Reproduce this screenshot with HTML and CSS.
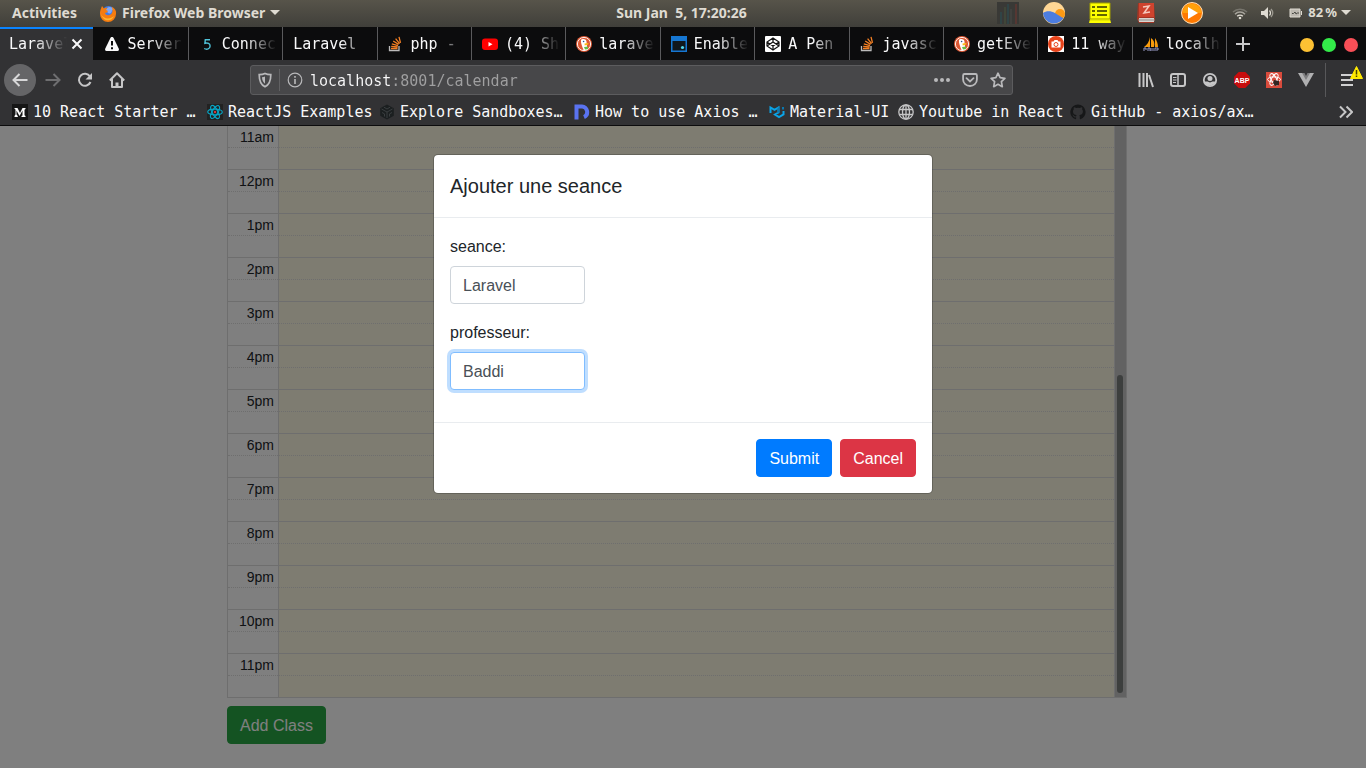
FILE: index.html
```html
<!DOCTYPE html>
<html lang="fr">
<head>
<meta charset="utf-8">
<title>Laravel</title>
<link rel="stylesheet" href="styles.css">
</head>
<body>
<svg class="sprite" aria-hidden="true">
  <symbol id="so" viewBox="0 0 16 16"><path d="M1.5 10v4.5h9.500V10" fill="none" stroke="#bcbbbb" stroke-width="1.300"/><path d="M3 12.500h6.500M3.200 10.300l6.400.7M3.800 7.800l6.200 1.800M5.200 5l5.400 3.400M7.600 2.600l4 5M11 .8l1.500 6" stroke="#f48024" stroke-width="1.300" fill="none"/></symbol>
  <symbol id="duck" viewBox="0 0 16 16"><circle cx="8" cy="8" r="8" fill="#de5833"/><circle cx="8" cy="8" r="6.600" fill="none" stroke="#fff" stroke-width=".9"/><path d="M5 4c1-1.500 5-1.500 5.500 1.500l.2 3 .8 5a6 6 0 0 1-4 .6C6.500 11 4.500 7 5 4z" fill="#fff"/><path d="M8.500 7.500l4-.5-.3 1.500-3.500 1z" fill="#fdb813"/><path d="M8 11l4-.5v2.500l-3 .6z" fill="#65bc46"/><circle cx="7.600" cy="5.500" r=".8" fill="#2d4f8e"/></symbol>
</svg>

<header class="topbar">
  <nav class="topbar-left">
    <button class="top-item">Activities</button>
    <button class="top-item">
      <svg width="18" height="18" viewBox="0 0 18 18"><circle cx="9.500" cy="8.500" r="6.500" fill="#3f7be8"/><path d="M10 3c3 0 5 2 5 4l-2-1c0 3-2 4-4 3l-3-4z" fill="#7fa8f5"/><path d="M3 2l2 2.500c1-.7 2-.8 3.500-.7L7 6l2 1-1 1.500-2 .5c1 3 5 3 7 0 1-2 .5-5-.5-6.500C16 4 17.500 7 17 10a8 8 0 0 1-16 0C.7 7 2 5 3 2z" fill="#f57c10"/><path d="M2 10c2 5 9 6 13 2-2 6-11 6-13-2z" fill="#ffb52b"/></svg>
      <span>Firefox Web Browser</span>
      <svg width="10" height="6" viewBox="0 0 10 6"><path d="M0 0h10L5 5z" fill="#dfdbd2"/></svg>
    </button>
  </nav>
  <time class="clock">Sun Jan&nbsp; 5, 17:20:26</time>
  <div class="tray">
    <svg width="22" height="22" viewBox="0 0 22 22"><path d="M0 0h22v22H0z" fill="#393936"/><path d="M4 10v12M11 2v20" stroke="#295056"/><path d="M8 5v17" stroke="#48543b"/><path d="M19 2v20" stroke="#74372f"/><path d="M14 7v15" stroke="#4b4b47"/></svg>
    <svg width="22" height="22" viewBox="0 0 22 22"><circle cx="11" cy="11" r="11" fill="#ffd795"/><circle cx="17" cy="12" r="5" fill="#fb9915"/><path d="M0 11c3-2.500 8-2.500 12 0s6 4 8.500 5a11 11 0 0 1-20.500-5z" fill="#4c7de0"/></svg>
    <svg width="22" height="22" viewBox="0 0 22 22"><path d="M1 1h20v16l1 4H0l1-4z" fill="#ff0"/><path d="M1 1h20v16H1z" fill="none" stroke="#a3a000"/><path d="M3 5h3M3 9h3M3 13h3M8 5h10M8 9h10M8 13h10" stroke="#333300" stroke-width="1.500"/><path d="M1 18h20" stroke="#d7d500"/></svg>
    <svg width="22" height="22" viewBox="0 0 22 22"><path d="M3 1l16 1 1 14-1 5H4l-2-4z" fill="#a33524"/><path d="M4 1h15v14H4z" fill="#ce432e"/><path d="M4 16h15v4H4z" fill="#d9d5d0"/><path d="M3 18h17" stroke="#8e8e8b"/><path d="M8 5l6-1-5 7 6-1" stroke="#f7c9bd" stroke-width="1.500" fill="none"/></svg>
    <svg width="22" height="22" viewBox="0 0 22 22"><circle cx="11" cy="11" r="10.500" fill="#ff7900" stroke="#ffe1b4"/><path d="M1.500 11a9.500 9.500 0 0 1 19 0z" fill="#ffa00b"/><path d="M7 5l10 6-10 6z" fill="#fff"/></svg>
    <div class="status">
      <svg width="16" height="16" viewBox="0 0 16 16" fill="none" stroke-width="1.500"><path d="M1 7a10 10 0 0 1 14 0" stroke="#77756d"/><path d="M3 9.200a7 7 0 0 1 10 0" stroke="#a8a59d"/><path d="M5.200 11.300a4 4 0 0 1 5.600 0" stroke="#dfdbd2"/><circle cx="8" cy="13" r="1.300" fill="#dfdbd2"/></svg>
      <svg width="16" height="16" viewBox="0 0 16 16" fill="none"><path d="M1 6h3l4-4v12l-4-4H1z" fill="#dfdbd2"/><path d="M9.500 5.500q2 2.500 0 5" stroke="#dfdbd2" stroke-width="1.300"/><path d="M11 4q3.500 4 0 8" stroke="#9b988f" stroke-width="1.300"/></svg>
      <svg width="16" height="16" viewBox="0 0 16 16"><path d="M2 4h10v8H2z" fill="#bcb8b0" stroke="#dfdbd2"/><path d="M13 6h1v4h-1z" fill="#dfdbd2"/><path d="M4 8.500h1.500L7 7l1 2 1.500-1H11" fill="none" stroke="#4b4a45"/></svg>
      <span>82&thinsp;%</span>
      <svg class="caret" width="10" height="6" viewBox="0 0 10 6"><path d="M0 0h10L5 5z" fill="#dfdbd2"/></svg>
    </div>
  </div>
</header>

<div class="tabstrip">
  <div class="tabs" role="tablist">
    <button class="tab active" role="tab" aria-selected="true"><span class="tab-text">Laravel</span><svg class="tab-close" width="12" height="12" viewBox="0 0 12 12"><path d="M1.500 1.500l9 9M10.500 1.500l-9 9" stroke="#f9f9fa" stroke-width="2"/></svg></button>
    <button class="tab" role="tab"><svg width="16" height="16" viewBox="0 0 16 16"><path d="M8 1c1 0 1.300.4 1.700 1.200l5 10.300c.6 1.300.1 2.500-1.200 2.500h-11c-1.300 0-1.800-1.200-1.200-2.500l5-10.300C6.700 1.400 7 1 8 1z" fill="#f9f9fa"/><path d="M8 5v4.500M8 11.200v2" stroke="#0c0c0d" stroke-width="2"/></svg><span class="tab-text">Server</span></button>
    <button class="tab" role="tab"><svg width="16" height="16" viewBox="0 0 16 16"><path d="M11 3.700H6.300l-.4 3.600c2.800-.8 5.200.2 5.200 2.700 0 3-3.300 4-5.900 2.500" fill="none" stroke="#4fc3d9" stroke-width="1.400"/></svg><span class="tab-text">Connec</span></button>
    <button class="tab" role="tab"><span class="tab-text">Laravel</span></button>
    <button class="tab" role="tab"><svg width="16" height="16"><use href="#so"/></svg><span class="tab-text">php -</span></button>
    <button class="tab" role="tab"><svg width="16" height="16" viewBox="0 0 16 16"><rect y="2.500" width="16" height="11.500" rx="3" fill="red"/><path d="M6.500 6l4 2.200-4 2.300z" fill="#fff"/></svg><span class="tab-text">(4) Sh</span></button>
    <button class="tab" role="tab"><svg width="16" height="16"><use href="#duck"/></svg><span class="tab-text">larave</span></button>
    <button class="tab" role="tab"><svg width="16" height="16" viewBox="0 0 16 16"><path d="M0 0h16v16H0z" fill="#1677d2"/><path d="M1.500 5h13v9.500h-13z" fill="#10171d"/><circle cx="11.500" cy="11.500" r="1.600" fill="#50d7ef"/></svg><span class="tab-text">Enable</span></button>
    <button class="tab" role="tab"><svg width="16" height="16" viewBox="0 0 16 16"><rect width="16" height="16" rx="1" fill="#fff"/><path d="M8 2l6 4v4l-6 4-6-4V6zM8 2v4M8 10v4M2 6l6 4 6-4M2 10l6-4 6 4" fill="none" stroke="#111" stroke-width="1.200"/></svg><span class="tab-text">A Pen</span></button>
    <button class="tab" role="tab"><svg width="16" height="16"><use href="#so"/></svg><span class="tab-text">javasc</span></button>
    <button class="tab" role="tab"><svg width="16" height="16"><use href="#duck"/></svg><span class="tab-text">getEve</span></button>
    <button class="tab" role="tab"><svg width="16" height="16" viewBox="0 0 16 16"><path d="M0 0h16v16H0z" fill="#fff"/><circle cx="8" cy="8" r="8" fill="#e8441b"/><path d="M3.500 5.500h2l1-1.500h3l1 1.500h2v6h-9z" fill="#fff"/><circle cx="8" cy="8.500" r="2" fill="none" stroke="#e8441b"/></svg><span class="tab-text">11 way</span></button>
    <button class="tab" role="tab"><svg width="16" height="16" viewBox="0 0 16 16"><path d="M7 1v10H1c3-2 5-5 6-10zM8 2c3 2 4 5 3 9H8zM12 2c2 3 3 6 3 9h-3z" fill="#f89c0e"/><path d="M1 15v-3h2v2M5 15v-3h2v3M8 12v3M10 12v3M12 15v-3h3v2h-2" stroke="#9a9cc8" fill="none"/></svg><span class="tab-text">localh</span></button>
  </div>
  <button class="new-tab" aria-label="New tab"><svg width="14" height="14" viewBox="0 0 14 14"><path d="M7 0v14M0 7h14" stroke="#c8c8c9" stroke-width="2"/></svg></button>
  <div class="window-controls">
    <button class="dot yellow" aria-label="Minimize"></button>
    <button class="dot green" aria-label="Maximize"></button>
    <button class="dot red" aria-label="Close"></button>
  </div>
</div>

<div class="navbar">
  <div class="nav-left">
    <button class="back" aria-label="Back"><svg width="16" height="16" viewBox="0 0 16 16"><path d="M15.500 8H1.500M7.500 2L1.500 8l6 6" fill="none" stroke="#d7d7d8" stroke-width="2"/></svg></button>
    <button aria-label="Forward"><svg width="16" height="16" viewBox="0 0 16 16"><path d="M.5 8h14M8.500 2l6 6-6 6" fill="none" stroke="#6e6e70" stroke-width="2"/></svg></button>
    <button aria-label="Reload"><svg width="16" height="16" viewBox="0 0 16 16"><path d="M13.500 10A6 6 0 1 1 13 4.500" fill="none" stroke="#c6c6c7" stroke-width="2"/><path d="M15 1v6.500H8.500z" fill="#c6c6c7"/></svg></button>
    <button aria-label="Home"><svg width="16" height="16" viewBox="0 0 16 16"><path d="M.8 8.500L8 1.300l7.200 7.200M3 7v8h10V7" fill="none" stroke="#c6c6c7" stroke-width="2" stroke-linejoin="round"/><path d="M6.500 15v-4.500h3V15" fill="#c6c6c7"/></svg></button>
  </div>
  <div class="urlbar">
    <svg width="16" height="16" viewBox="0 0 16 16"><path d="M8 1.500c2 1 4 1.200 5.800 1.200 0 6-1.300 10-5.800 12-4.500-2-5.800-6-5.800-12C4 2.700 6 2.500 8 1.500z" fill="none" stroke="#b9b9bb" stroke-width="1.700"/><path d="M8 4.500v7.300C5.800 10 5.200 8 5 5.300 6.200 5.200 7 5 8 4.500z" fill="#b9b9bb"/></svg>
    <span class="url-sep"></span>
    <svg width="16" height="16" viewBox="0 0 16 16"><circle cx="8" cy="8" r="6.800" fill="none" stroke="#b9b9bb" stroke-width="1.200"/><path d="M8 7v5M8 4v1.700" stroke="#b9b9bb" stroke-width="1.600"/></svg>
    <input class="url" type="text" aria-label="Address" value="localhost:8001/calendar">
    <div class="url-actions">
      <svg width="16" height="16" viewBox="0 0 16 16" fill="#b9b9bb"><circle cx="2" cy="8" r="2"/><circle cx="8" cy="8" r="2"/><circle cx="14" cy="8" r="2"/></svg>
      <svg width="16" height="16" viewBox="0 0 16 16" fill="none" stroke="#b9b9bb" stroke-width="1.800"><path d="M2.500 2h11c.8 0 1.400.6 1.400 1.400V7.500a6.900 6.500 0 0 1-13.800 0V3.400C1.100 2.600 1.700 2 2.500 2z"/><path d="M4.500 6.200L8 9.500l3.500-3.300" stroke-linecap="round"/></svg>
      <svg width="16" height="16" viewBox="0 0 16 16"><path d="M8 1.200l2.100 4.500 4.800.6-3.500 3.400.9 5L8 12.300l-4.300 2.400.9-5L1.100 6.300l4.800-.6z" fill="none" stroke="#b9b9bb" stroke-width="1.700" stroke-linejoin="round"/></svg>
    </div>
  </div>
  <div class="nav-right">
    <button aria-label="Library"><svg width="16" height="16" viewBox="0 0 16 16"><path d="M1.500 1v14M5.500 1v14M9 1v14M11 3l4 12" stroke="#c6c6c7" stroke-width="2"/></svg></button>
    <button aria-label="Sidebar"><svg width="16" height="16" viewBox="0 0 16 16"><rect x="1" y="2" width="14" height="12" rx="2" fill="none" stroke="#c6c6c7" stroke-width="2"/><path d="M8 2v12" stroke="#c6c6c7" stroke-width="1.500"/><path d="M3 5.500h3.500M3 8h3.500M3 10.500h3" stroke="#c6c6c7"/></svg></button>
    <button aria-label="Account"><svg width="16" height="16" viewBox="0 0 16 16"><circle cx="8" cy="8" r="6.200" fill="none" stroke="#c6c6c7" stroke-width="1.800"/><circle cx="8" cy="6.500" r="2.500" fill="#c6c6c7"/><path d="M2.500 9.500h3l2.500 1 2.500-1h3c-1 5-10 6-11 0z" fill="#c6c6c7"/></svg></button>
    <button class="abp" aria-label="Adblock Plus"><svg width="16" height="16" viewBox="0 0 16 16"><path d="M4.700 0h6.600L16 4.700v6.600L11.300 16H4.700L0 11.300V4.700z" fill="#c70d0d"/><text x="8" y="11" text-anchor="middle">ABP</text></svg></button>
    <button aria-label="React Developer Tools"><svg width="16" height="16" viewBox="0 0 16 16"><path d="M0 0h16v16H0z" fill="#d94b3c"/><g fill="none" stroke="#fff"><ellipse cx="8" cy="7.500" rx="6.500" ry="2.600"/><ellipse cx="8" cy="7.500" rx="6.500" ry="2.600" transform="rotate(60 8 7.500)"/><ellipse cx="8" cy="7.500" rx="6.500" ry="2.600" transform="rotate(120 8 7.500)"/></g><path d="M8 8l5 1v4l-4 1-2-3z" fill="#332522"/></svg></button>
    <button aria-label="Vue"><svg width="16" height="16" viewBox="0 0 16 16"><path d="M0 1h5l3 5 3-5h5L8 15z" fill="#b0b0b1"/><path d="M4 1h2.500L8 4l1.500-3H12L8 8z" fill="#7d7d7f"/></svg></button>
  </div>
  <button class="menu" aria-label="Menu"><svg width="16" height="16" viewBox="0 0 16 16"><path d="M2 3h12M2 8h12M2 13h12" stroke="#d0d0d1" stroke-width="2"/></svg>
    <svg class="warn" width="13" height="13" viewBox="0 0 13 13"><path d="M6.500.5l6 12H.5z" fill="#ffe900" stroke="#ffe900" stroke-linejoin="round"/><path d="M6.500 4v4.500M6.500 9.500V11" stroke="#4a4300" stroke-width="1.500"/></svg>
  </button>
</div>

<nav class="bookmarks">
  <a class="bm long" href="#"><svg width="16" height="16" viewBox="0 0 16 16"><path d="M0 0h16v16H0z" fill="#161616"/><path d="M2.500 4h3L8 9l2.500-5h3v1l-1 .7v5.600l1 .7v1H9.500v-1l1-.6V6.500L7.500 12 4.500 6.500v4l1.300 1.600v.9H2.500v-.9l1-1.600V5.500l-1-.7z" fill="#fff"/></svg>10 React Starter …</a>
  <a class="bm mid" href="#"><svg width="16" height="16" viewBox="0 0 16 16"><path d="M0 0h16v16H0z" fill="#222"/><g fill="none" stroke="#08a4c4" stroke-width="1.200"><ellipse cx="8" cy="8" rx="7.300" ry="2.800"/><ellipse cx="8" cy="8" rx="7.300" ry="2.800" transform="rotate(60 8 8)"/><ellipse cx="8" cy="8" rx="7.300" ry="2.800" transform="rotate(120 8 8)"/></g><circle cx="8" cy="8" r="1.200" fill="#d13b3b"/></svg>ReactJS Examples</a>
  <a class="bm long" href="#"><svg width="16" height="16" viewBox="0 0 16 16"><path d="M8 .5l6.800 3.800v7.400L8 15.500l-6.800-3.800V4.300z" fill="#1b1f20"/><path d="M2.500 5L8 8l5.500-3M8 8v6M5 3.200L8 5l3-1.800M3 8.500l2.500 1.400v2.600M13 8.500l-2.500 1.400v2.600" fill="none" stroke="#3a3e40"/></svg>Explore Sandboxes…</a>
  <a class="bm long" href="#"><svg width="16" height="16" viewBox="0 0 16 16"><path d="M2.500 15.500v-13H8a5 5.500 0 0 1 2 10.600" fill="none" stroke="#5a73f0" stroke-width="4"/></svg>How to use Axios …</a>
  <a class="bm short" href="#"><svg width="16" height="16" viewBox="0 0 16 16" fill="none" stroke-width="2"><path d="M1.500 9V3.500l4 2.300 4-2.300v5L6 10.500l4 2.500 4.500-2.600V7" stroke="#0aa4e8"/><path d="M14 3v2.500M9.500 3.500v5" stroke="#0b78b0"/></svg>Material-UI</a>
  <a class="bm mid" href="#"><svg width="16" height="16" viewBox="0 0 16 16" fill="none" stroke="#c6c6c7" stroke-width="1.300"><circle cx="8" cy="8" r="7.200"/><ellipse cx="8" cy="8" rx="3.500" ry="7.200"/><path d="M8 1v14M1.500 5.500h13M1.500 10.500h13"/></svg>Youtube in React</a>
  <a class="bm" href="#"><svg width="16" height="16" viewBox="0 0 16 16"><path d="M8 .5a7.600 7.600 0 0 0-2.500 14.800c.5 0 .6-.2.600-.5v-1.500c-2 .4-2.600-.7-2.800-1.400-.2-.4-.8-.9-1.100-1.100.8-.3 1.400.5 1.700.9.600 1 1.500.8 2.200.5.100-.5.300-.8.600-1-1.900-.3-3.700-1-3.700-3.900 0-.8.300-1.500.8-2.100-.2-.6-.2-1.300.1-2 .9 0 1.600.5 2.200.9a7 7 0 0 1 3.800 0c.7-.4 1.300-.8 2.200-.9.200.7.300 1.400 0 2 .5.600.8 1.300.8 2.100 0 2.900-1.800 3.600-3.700 3.800.4.300.6.800.6 1.500v2.200c0 .3.200.6.600.5A7.600 7.600 0 0 0 8 .5z" fill="#161718"/></svg>GitHub - axios/ax…</a>
  <button class="overflow" aria-label="More bookmarks"><svg width="14" height="14" viewBox="0 0 14 14"><path d="M1 1.500L6.500 7 1 12.500M7.500 1.500L13 7l-5.500 5.500" fill="none" stroke="#c6c6c7" stroke-width="2"/></svg></button>
</nav>

<main class="viewport">
  <div class="page">
    <div class="container">
      <div class="calendar">
        <table class="slots">
          <tbody>
            <tr><th class="axis" scope="row">11am</th><td></td></tr><tr class="half"><th class="axis"></th><td></td></tr>
            <tr><th class="axis" scope="row">12pm</th><td></td></tr><tr class="half"><th class="axis"></th><td></td></tr>
            <tr><th class="axis" scope="row">1pm</th><td></td></tr><tr class="half"><th class="axis"></th><td></td></tr>
            <tr><th class="axis" scope="row">2pm</th><td></td></tr><tr class="half"><th class="axis"></th><td></td></tr>
            <tr><th class="axis" scope="row">3pm</th><td></td></tr><tr class="half"><th class="axis"></th><td></td></tr>
            <tr><th class="axis" scope="row">4pm</th><td></td></tr><tr class="half"><th class="axis"></th><td></td></tr>
            <tr><th class="axis" scope="row">5pm</th><td></td></tr><tr class="half"><th class="axis"></th><td></td></tr>
            <tr><th class="axis" scope="row">6pm</th><td></td></tr><tr class="half"><th class="axis"></th><td></td></tr>
            <tr><th class="axis" scope="row">7pm</th><td></td></tr><tr class="half"><th class="axis"></th><td></td></tr>
            <tr><th class="axis" scope="row">8pm</th><td></td></tr><tr class="half"><th class="axis"></th><td></td></tr>
            <tr><th class="axis" scope="row">9pm</th><td></td></tr><tr class="half"><th class="axis"></th><td></td></tr>
            <tr><th class="axis" scope="row">10pm</th><td></td></tr><tr class="half"><th class="axis"></th><td></td></tr>
            <tr><th class="axis" scope="row">11pm</th><td></td></tr><tr class="half"><th class="axis"></th><td></td></tr>
          </tbody>
        </table>
        <div class="track"><div class="thumb"></div></div>
      </div>
      <button class="btn success">Add Class</button>
    </div>
  </div>
  <div class="backdrop">
    <form class="modal" role="dialog" aria-labelledby="modal-title">
      <div class="modal-header"><h5 id="modal-title">Ajouter une seance</h5></div>
      <div class="modal-body">
        <div class="group"><label for="seance">seance:</label><input id="seance" class="control" type="text" value="Laravel"></div>
        <div class="group"><label for="prof">professeur:</label><input id="prof" class="control focused" type="text" value="Baddi"></div>
      </div>
      <div class="modal-footer">
        <button class="btn primary" type="button">Submit</button>
        <button class="btn danger" type="button">Cancel</button>
      </div>
    </form>
  </div>
</main>
</body>
</html>
```

FILE: styles.css
```css
* { box-sizing: border-box; }
html, body { height: 100%; }
body {
  margin: 0;
  display: flex;
  flex-direction: column;
  overflow: hidden;
  font-family: "Liberation Sans", Arial, sans-serif;
  font-size: 16px;
  line-height: 24px;
  color: #212529;
}
button { font: inherit; color: inherit; background: none; border: 0; padding: 0; }
svg { display: block; flex: none; }
.sprite { position: absolute; width: 0; height: 0; }

/* Desktop panel */
.topbar {
  flex: none;
  height: 27px;
  display: grid;
  grid-template-columns: 1fr auto 1fr;
  align-items: center;
  padding: 0 15px 2px 12px;
  background: linear-gradient(#57544a, #403f3a);
  color: #dfdbd2;
  font: bold 14px/25px "Noto Sans", sans-serif;
}
.topbar-left { display: flex; gap: 22px; }
.top-item { display: flex; align-items: center; gap: 5px; }
.tray { display: flex; align-items: center; justify-content: flex-end; gap: 24px; }
.status { display: flex; align-items: center; gap: 12px; margin-left: 5px; font-size: 13px; }
.status span { margin: 0 -8px; }

/* Tab strip */
.tabstrip {
  flex: none;
  height: 33px;
  display: flex;
  background: #0c0c0d;
  color: #f9f9fa;
  font: 15px/32px "DejaVu Sans Mono", monospace;
}
.tabs { flex: 1; display: flex; min-width: 0; }
.tab {
  flex: 1 1 0;
  min-width: 0;
  display: flex;
  align-items: center;
  gap: 7px;
  padding: 1px 5px 0 10px;
  border-right: 1px solid #5a5a5c;
}
.tab.active {
  gap: 4px;
  background: #323234;
  border-right-color: #0c0c0d;
  box-shadow: inset 0 2px #0a84ff;
  padding-left: 9px;
  padding-right: 6px;
}
.tab-close { margin-right: 4px; }
.tab-text {
  flex: 1;
  overflow: hidden;
  white-space: nowrap;
  text-align: left;
  mask-image: linear-gradient(to left, transparent, #000 32px);
}
.new-tab { width: 31px; display: grid; place-items: center; }
.window-controls { width: 108px; display: flex; align-items: center; justify-content: flex-end; gap: 8px; padding: 3px 8px 0 0; }
.dot { width: 14px; height: 14px; border-radius: 50%; }
.yellow { background: #fdc133; }
.green { background: #33eb49; }
.red { background: #f94f57; }

/* Navigation bar */
.navbar { flex: none; height: 40px; display: flex; align-items: center; background: #323234; }
.nav-left { flex: none; width: 250px; display: flex; align-items: center; gap: 16px; padding-left: 4px; }
.back { width: 32px; height: 32px; display: grid; place-items: center; border-radius: 50%; background: #656567; margin-right: -7px; }
.urlbar {
  flex: 1;
  min-width: 0;
  height: 30px;
  display: flex;
  align-items: center;
  gap: 7px;
  padding: 0 6px;
  background: #474749;
  border: 1px solid #5c5c5e;
  border-radius: 3px;
}
.url-sep { width: 1px; height: 22px; background: #616163; margin-left: -1px; }
.url {
  flex: 1;
  min-width: 0;
  padding: 2px 0 0;
  border: 0;
  outline: 0;
  font: 15px/20px "DejaVu Sans Mono", monospace;
  color: transparent;
  background: linear-gradient(to right, #f9f9fa 9ch, #a0a0a1 9ch);
  -webkit-background-clip: text;
  background-clip: text;
}
.url-actions { display: flex; gap: 12px; }
.nav-right { flex: none; display: flex; gap: 16px; padding: 0 11px 0 125px; }
.abp text { font: bold 7px "Liberation Sans", sans-serif; fill: #fff; }
.menu { position: relative; width: 41px; height: 34px; border-left: 1px solid #58585a; padding-left: 13px; }
.warn { position: absolute; top: 3px; right: 3px; }

/* Bookmarks bar */
.bookmarks {
  flex: none;
  height: 26px;
  display: flex;
  align-items: center;
  padding: 0 13px 1px 12px;
  background: #323234;
  border-bottom: 1px solid #0c0c0d;
  font: 15px/22px "DejaVu Sans Mono", monospace;
}
.bm { display: flex; align-items: center; gap: 5px; color: #f9f9fa; text-decoration: none; white-space: nowrap; }
.long { width: 195px; }
.mid { width: 172px; }
.short { width: 129px; }
.overflow { margin-left: auto; }

/* Page */
.viewport { flex: 1; min-height: 0; position: relative; overflow: hidden; background: #fff; }
.page { padding-right: 12px; }
.container { max-width: 900px; margin: 0 auto; }
.calendar { display: flex; margin: -1px 0 8px; }
.slots { flex: 1; border-collapse: collapse; }
.slots th, .slots td { height: 22px; padding: 0; border: 1px solid #ddd; border-bottom: 0; }
.slots .half th, .slots .half td { border-top-style: dotted; }
.slots tr:last-child th, .slots tr:last-child td { border-bottom: 1px solid #ddd; }
.slots td { background: #fcf8e3; }
.slots .axis { width: 51px; padding-right: 4px; text-align: right; font-weight: normal; font-size: 14px; line-height: 20px; }
.slots .axis[scope] { padding-top: 1px; }
.track { width: 12px; display: flex; align-items: flex-end; padding: 0 3px 4px 2px; background: #c4c4c4; border-right: 1px solid #ddd; border-bottom: 1px solid #ddd; }
.thumb { width: 100%; height: 56%; border-radius: 3px; background: #7b7f7d; }

.btn { height: 38px; padding: 7px 12px 5px; border: 1px solid; border-radius: 4px; color: #fff; }
.success { background: #28a745; border-color: #28a745; }
.primary { background: #007bff; border-color: #007bff; }
.danger { background: #dc3545; border-color: #dc3545; }

/* Modal */
.backdrop { position: absolute; inset: 0; padding-top: 28px; background: rgba(0, 0, 0, 0.5); }
.modal {
  max-width: 500px;
  margin: 0 auto;
  background: #fff;
  background-clip: padding-box;
  border: 1px solid rgba(0, 0, 0, 0.2);
  border-radius: 5px;
}
.modal-header { padding: 16px; border-bottom: 1px solid #e9ecef; }
.modal-header h5 { margin: 0; font-size: 20px; line-height: 30px; font-weight: normal; }
.modal-body { padding: 16px; }
.group { display: flex; flex-direction: column; align-items: flex-start; gap: 6px; margin-bottom: 16px; }
.group label { line-height: 26px; }
.control {
  width: 135px;
  height: 38px;
  padding: 7px 12px 5px;
  font: inherit;
  color: #495057;
  background: #fff;
  border: 1px solid #ced4da;
  border-radius: 4px;
}
.control.focused { border-color: #80bdff; box-shadow: 0 0 0 3px rgba(0, 123, 255, 0.25); }
.modal-footer { display: flex; justify-content: flex-end; gap: 8px; padding: 16px; border-top: 1px solid #e9ecef; }
```
